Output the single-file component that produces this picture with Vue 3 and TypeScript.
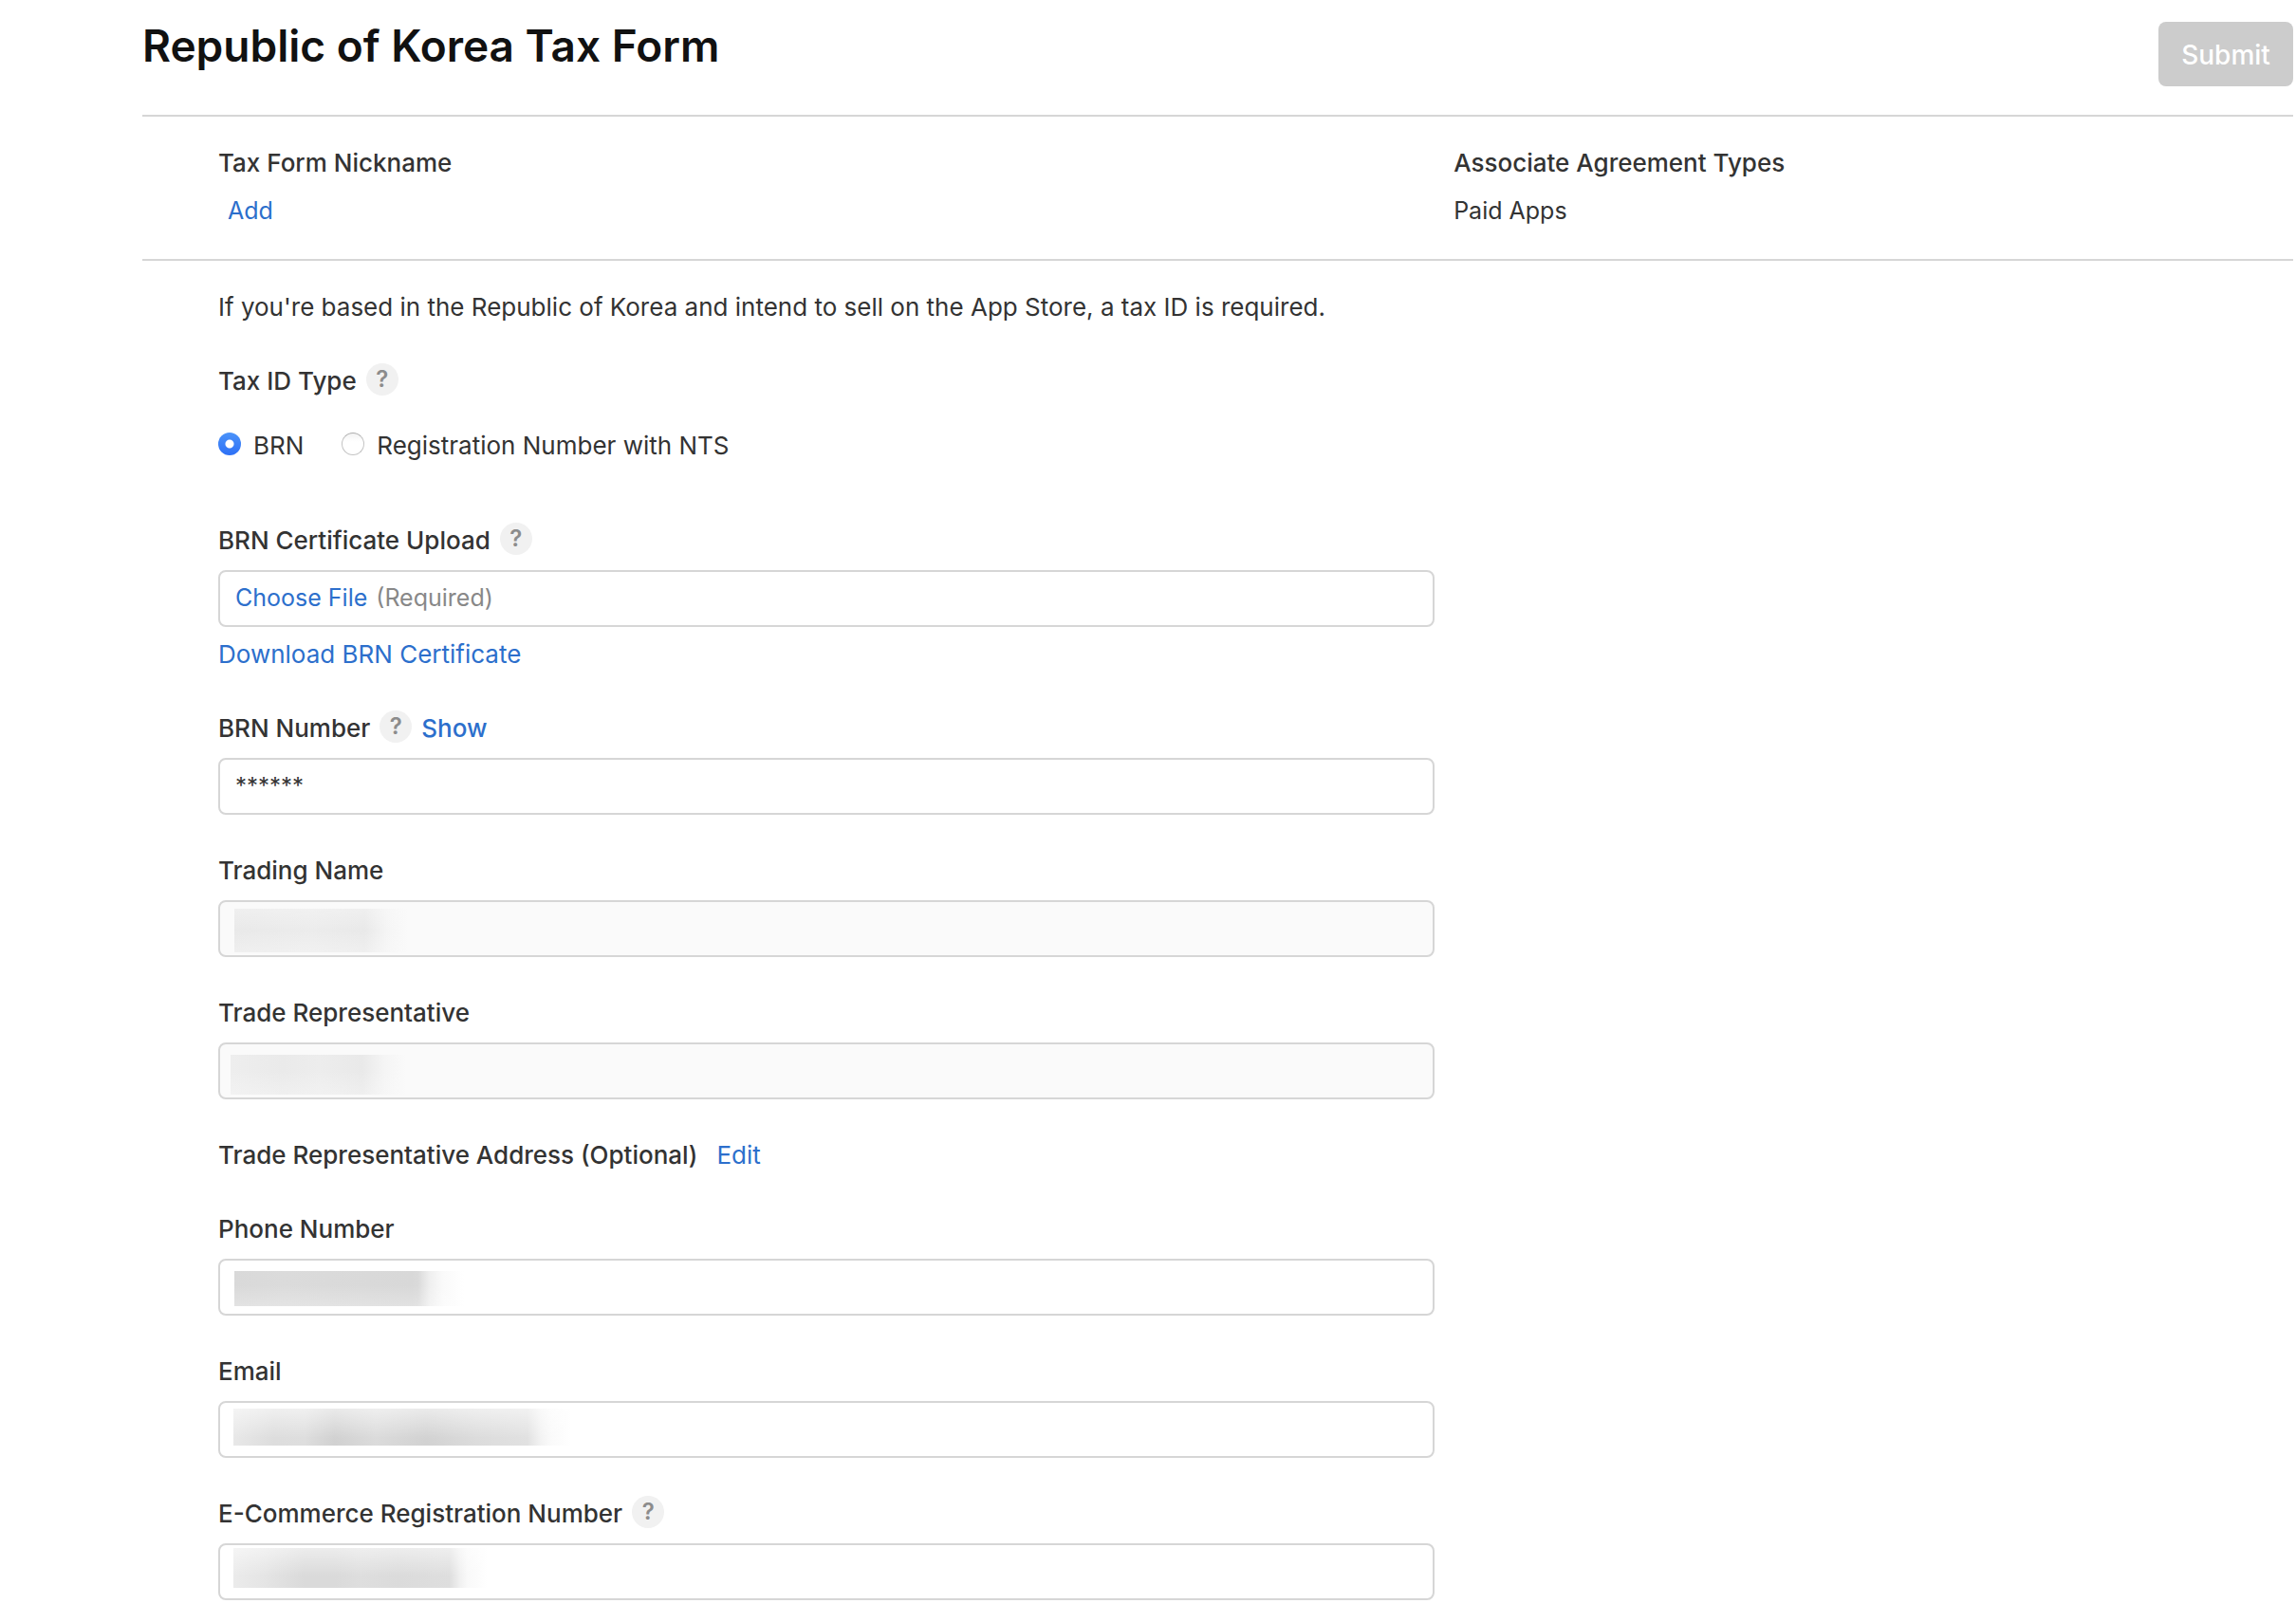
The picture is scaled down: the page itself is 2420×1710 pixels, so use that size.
<script setup lang="ts">
import { ref } from 'vue'

interface Field {
  id: string
  label: string
  type: string
  readonly?: boolean
  help?: boolean
}

const tradeFields: Field[] = [
  { id: 'trading-name', label: 'Trading Name', type: 'text', readonly: true },
  { id: 'trade-representative', label: 'Trade Representative', type: 'text', readonly: true },
]

const contactFields: Field[] = [
  { id: 'phone', label: 'Phone Number', type: 'tel' },
  { id: 'email', label: 'Email', type: 'email' },
  { id: 'ecommerce', label: 'E-Commerce Registration Number', type: 'text', help: true },
]

const taxIdType = ref('brn')
const brnNumber = ref('******')
</script>

<template>
  <main class="page">
    <header class="header">
      <h1>Republic of Korea Tax Form</h1>
      <button type="submit" form="tax-form" class="submit" disabled>Submit</button>
    </header>

    <section class="summary columns">
      <div class="summary-item">
        <h2>Tax Form Nickname</h2>
        <button type="button" class="link add">Add</button>
      </div>
      <div class="summary-item">
        <h2>Associate Agreement Types</h2>
        <p>Paid Apps</p>
      </div>
    </section>

    <form id="tax-form" class="columns" @submit.prevent>
      <div class="form-body">
        <p class="intro">
          If you're based in the Republic of Korea and intend to sell on the App Store, a tax ID is required.
        </p>

        <div class="tax-type" role="radiogroup" aria-labelledby="tax-type-label">
          <div class="label-row">
            <span id="tax-type-label" class="label">Tax ID Type</span>
            <button type="button" class="help">?</button>
          </div>
          <div class="radios">
            <label class="radio"><input v-model="taxIdType" type="radio" name="tax-id" value="brn" />BRN</label>
            <label class="radio"><input v-model="taxIdType" type="radio" name="tax-id" value="nts" />Registration Number with NTS</label>
          </div>
        </div>

        <div class="field">
          <div class="label-row">
            <label class="label" for="certificate">BRN Certificate Upload</label>
            <button type="button" class="help">?</button>
          </div>
          <div class="box upload">
            <span class="choose">Choose File</span>
            <span class="required">(Required)</span>
            <input id="certificate" type="file" class="file" />
          </div>
          <a href="#certificate" class="download">Download BRN Certificate</a>
        </div>

        <div class="field">
          <div class="label-row">
            <label class="label" for="brn-number">BRN Number</label>
            <button type="button" class="help">?</button>
            <button type="button" class="link show">Show</button>
          </div>
          <input id="brn-number" v-model="brnNumber" type="text" class="box" />
        </div>

        <div v-for="field in tradeFields" :key="field.id" class="field">
          <div class="label-row">
            <label class="label" :for="field.id">{{ field.label }}</label>
          </div>
          <input :id="field.id" :type="field.type" :readonly="field.readonly" class="box redacted" />
        </div>

        <div class="address">
          <span class="label">Trade Representative Address (Optional)</span>
          <button type="button" class="link">Edit</button>
        </div>

        <div v-for="field in contactFields" :key="field.id" class="field">
          <div class="label-row">
            <label class="label" :for="field.id">{{ field.label }}</label>
            <button v-if="field.help" type="button" class="help">?</button>
          </div>
          <input :id="field.id" :type="field.type" class="box redacted" />
        </div>
      </div>
    </form>
  </main>
</template>

<style>
body {
  background: #fff;
}
</style>

<style scoped>
.page,
.page * {
  box-sizing: border-box;
}

.page {
  padding: 0 3px 23px 150px;
  color: #333;
  font-family: Inter, "Liberation Sans", sans-serif;
  font-size: 26px;
  line-height: 38px;
}

h1,
h2,
p {
  margin: 0;
}

button,
input {
  font: inherit;
  color: inherit;
}

button {
  padding: 0;
  border: 0;
  background: none;
}

.header {
  display: flex;
  justify-content: space-between;
  align-items: flex-start;
  padding: 23px 0 30px;
  border-bottom: 2px solid #d6d6d6;
}

h1 {
  color: #111;
  font-size: 46px;
  font-weight: 600;
  line-height: 50px;
}

.submit {
  width: 142px;
  height: 68px;
  padding-top: 2px;
  border-radius: 8px;
  background: #ccc;
  color: #fff;
  font-size: 28px;
  font-weight: 500;
}

.columns {
  display: grid;
  grid-template-columns: 71fr 49fr;
  column-gap: 20px;
  padding-left: 80px;
}

.summary {
  padding-top: 30px;
  padding-bottom: 32px;
  border-bottom: 2px solid #d6d6d6;
}

.summary-item {
  display: flex;
  flex-direction: column;
  align-items: flex-start;
  gap: 12px;
  font-size: 25px;
}

h2,
.label {
  font-size: 26px;
  font-weight: 500;
}

.link,
.download,
.choose {
  color: #2c6fcc;
  text-decoration: none;
}

.add {
  padding-left: 10px;
}

.form-body {
  display: flex;
  flex-direction: column;
  gap: 40px;
  padding-top: 30px;
}

.intro {
  white-space: nowrap;
}

.tax-type {
  margin-bottom: 22px;
}

.label-row {
  display: flex;
  align-items: center;
  gap: 10px;
  height: 38px;
}

.help {
  width: 34px;
  height: 34px;
  margin-bottom: 4px;
  border-radius: 50%;
  background: #f1f1f1;
  color: #8c8c8c;
  font-size: 24px;
  font-weight: 600;
  line-height: 34px;
}

.show {
  font-weight: 500;
}

.radios {
  display: flex;
  gap: 40px;
  margin-top: 30px;
}

.radio {
  display: flex;
  align-items: center;
  gap: 13px;
}

.radio input {
  appearance: none;
  width: 24px;
  height: 24px;
  margin: 0 0 4px;
  border: 1px solid #c4c4c4;
  border-top-color: #adadad;
  border-radius: 50%;
  background: linear-gradient(#f3f3f3, #fff 40%);
}

.radio input:checked {
  border: 0;
  background: radial-gradient(circle, #fff 4px, transparent 5px), linear-gradient(#4b93f9, #2d70f6);
}

.box {
  display: block;
  width: 100%;
  height: 60px;
  padding: 0 16px 2px;
  border: 2px solid #d6d6d6;
  border-radius: 8px;
  background-color: #fff;
  background-repeat: no-repeat;
  font-size: 24px;
  outline: none;
}

.field .label-row {
  margin-bottom: 12px;
}

.upload {
  display: flex;
  align-items: center;
  gap: 9px;
  position: relative;
  font-size: 25px;
}

.required {
  color: #888;
}

.file {
  position: absolute;
  inset: 0;
  width: 100%;
  opacity: 0;
}

.download {
  display: block;
  width: fit-content;
  margin-top: 10px;
}

.address {
  display: flex;
  gap: 20px;
}

.box:read-only {
  background-color: #fafafa;
}

.upload.box {
  background-color: #fff;
}

/* Smudges that stand in for the private values */
#trading-name {
  background-image:
    linear-gradient(#fafafa59, transparent 50%, #fafafa59),
    linear-gradient(90deg, #e9e9e9, #ececec 45%, #e9e9e9 75%, #f5f5f5 88%, #fafafa);
  background-position: 15px 7px;
  background-size: 183px 46px;
}

#trade-representative {
  background-image:
    linear-gradient(transparent 40%, #fafafa59),
    linear-gradient(90deg, #eee, #eaeaea 30%, #ededed 50%, #e9e9e9 75%, #f5f5f5 88%, #fafafa);
  background-position: 11px 11px;
  background-size: 185px 42px;
}

#phone {
  background-image:
    linear-gradient(transparent 40%, #ffffff40),
    linear-gradient(90deg, #d9d9d9, #dbdbdb 22%, #d8d8d8 77%, #dadada 80%, #efefef 85%, #fafafa 91%, #fff);
  background-position: 15px 11px;
  background-size: 242px 37px;
}

#email {
  background-image:
    linear-gradient(#ffffff8c, transparent 80%),
    linear-gradient(90deg, #e8e8e8, #ddd 12%, #dedede 21%, #d1d1d1 30%, #dbdbdb 42%, #d2d2d2 57%, #dcdcdc 72%, #e1e1e1 87%, #f3f3f3 91%, #fafafa 94%, #fff);
  background-position: 14px 6px;
  background-size: 356px 39px;
}

#ecommerce {
  background-image:
    linear-gradient(#ffffff80, transparent 70%),
    linear-gradient(90deg, #ebebeb, #e5e5e5 12%, #dadada 28%, #dadada 40%, #dedede 50%, #dbdbdb 65%, #dedede 85%, #f0f0f0 89%, #f9f9f9 92%, #fff);
  background-position: 14px 3px;
  background-size: 268px 42px;
}
</style>
